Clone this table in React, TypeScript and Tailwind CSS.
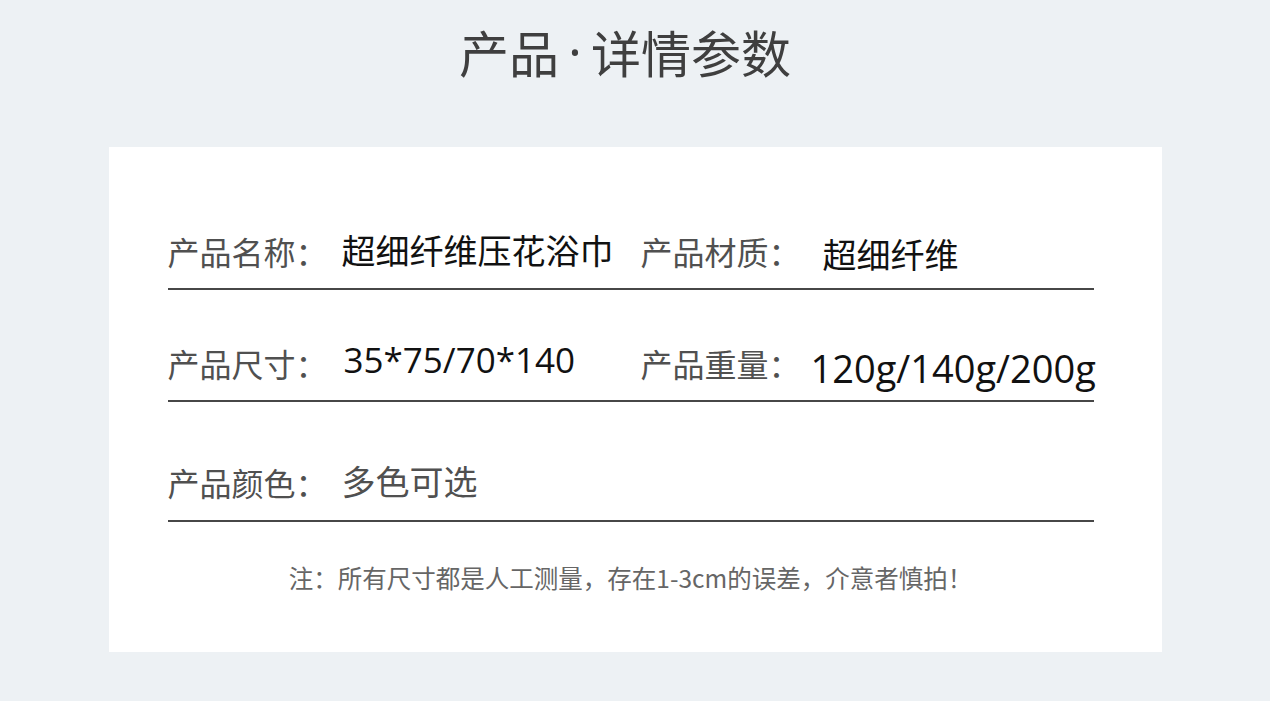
const cjk = "font-['Noto_Sans_CJK_SC',sans-serif]";

const Label = ({ children }: { children: React.ReactNode }) => (
  <span className={`${cjk} shrink-0 whitespace-nowrap text-[32px] leading-none text-[#505050]`}>{children}</span>
);

const Value = ({ children, className = "" }: { children: React.ReactNode; className?: string }) => (
  <span className={`shrink-0 whitespace-nowrap text-[34px] leading-none ${className}`}>{children}</span>
);

const App = () => {
  return (
    <div className="min-h-[701px] w-full bg-[#edf1f4] flex flex-col items-center">
      <h1 className={`${cjk} mt-[26px] ml-[-20px] text-[50px] leading-none font-normal text-[#3f3f3f] flex items-center`}>
        <span>产品</span>
        <span className="w-[32px] text-center font-['Noto_Sans',sans-serif]">·</span>
        <span>详情参数</span>
      </h1>

      <div className="mt-[71px] w-[1053px] h-[505px] bg-white flex flex-col pl-[59px] pt-[31px]">
        <div className="w-[926px] flex flex-col">
          {/* row 1 */}
          <div className="h-[112px] flex items-end pb-[21px] border-b-2 border-[#474747]">
            <div className="w-[473px] shrink-0 flex items-end">
              <Label>产品名称：</Label>
              <Value className={`${cjk} ml-[14px] text-[#111]`}>超细纤维压花浴巾</Value>
            </div>
            <div className="flex items-end">
              <Label>产品材质：</Label>
              <Value className={`${cjk} ml-[22px] mb-[-4px] text-[#111]`}>超细纤维</Value>
            </div>
          </div>

          {/* row 2 */}
          <div className="h-[112px] flex items-end pb-[21px] border-b-2 border-[#474747]">
            <div className="w-[473px] shrink-0 flex items-end">
              <Label>产品尺寸：</Label>
              <Value className="ml-[16px] mb-[2px] text-[35px] text-[#111] font-['Open_Sans',sans-serif]">
                35*75/70*140
              </Value>
            </div>
            <div className="flex items-end">
              <Label>产品重量：</Label>
              <Value className="ml-[10px] mb-[-8px] text-[38px] text-[#111] font-['Open_Sans',sans-serif]">
                120g/140g/200g
              </Value>
            </div>
          </div>

          {/* row 3 */}
          <div className="h-[120px] flex items-end pb-[22px] border-b-2 border-[#474747]">
            <Label>产品颜色：</Label>
            <Value className={`${cjk} ml-[14px] text-[32px] text-[#505050]`}>多色可选</Value>
          </div>
        </div>

        <p className={`${cjk} mt-[44px] w-[926px] text-center text-[24.5px] leading-none text-[#666]`}>
          注：所有尺寸都是人工测量，存在1-3cm的误差，介意者慎拍！
        </p>
      </div>
    </div>
  );
};

export default App;
